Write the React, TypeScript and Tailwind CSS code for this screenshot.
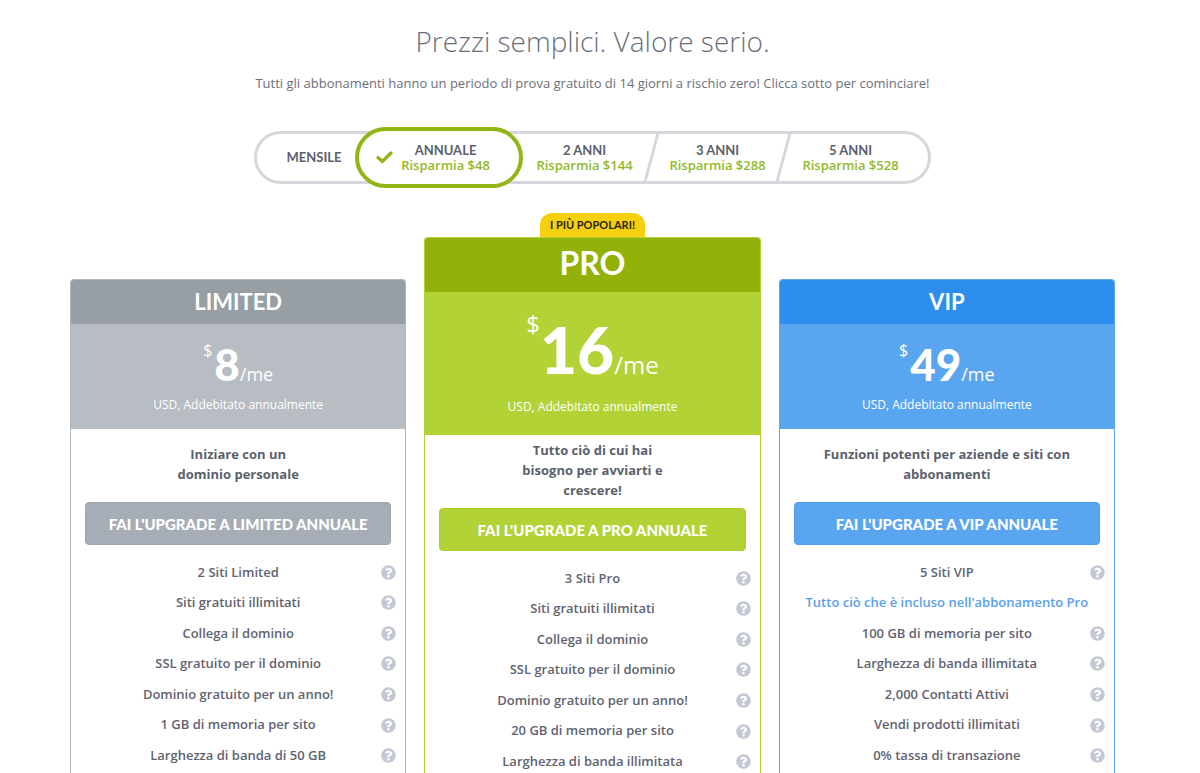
import React, { useState } from 'react';
import { FaQuestionCircle } from 'react-icons/fa';
import { clsx } from 'clsx';

type Term = {
  id: string;
  label: string;
  saving?: string;
  width: string;
};

type Feature = {
  text: string;
  highlight?: boolean;
};

type Plan = {
  id: string;
  name: string;
  price: string;
  description: string;
  cta: string;
  featured?: boolean;
  border: string;
  header: string;
  body: string;
  button: string;
  descriptionWidth: string;
  features: Feature[];
};

const terms: Term[] = [
  { id: 'monthly', label: 'MENSILE', width: 'w-[98px] pl-4' },
  { id: 'yearly', label: 'ANNUALE', saving: 'Risparmia $48', width: 'w-[168px] pr-3' },
  { id: '2y', label: '2 ANNI', saving: 'Risparmia $144', width: 'w-[127px] pr-1' },
  { id: '3y', label: '3 ANNI', saving: 'Risparmia $288', width: 'w-[129px]' },
  { id: '5y', label: '5 ANNI', saving: 'Risparmia $528', width: 'w-[143px] pr-3' },
];

const plans: Plan[] = [
  {
    id: 'limited',
    name: 'LIMITED',
    price: '8',
    description: 'Iniziare con un dominio personale',
    cta: "FAI L'UPGRADE A LIMITED ANNUALE",
    border: 'border-[#b0b5c0]',
    header: 'bg-[#979ea4]',
    body: 'bg-[#b7bdc2]',
    button: 'bg-[#a7adb6] border-[#a0a6ae]',
    descriptionWidth: 'max-w-[140px]',
    features: [
      { text: '2 Siti Limited' },
      { text: 'Siti gratuiti illimitati' },
      { text: 'Collega il dominio' },
      { text: 'SSL gratuito per il dominio' },
      { text: 'Dominio gratuito per un anno!' },
      { text: '1 GB di memoria per sito' },
      { text: 'Larghezza di banda di 50 GB' },
    ],
  },
  {
    id: 'pro',
    name: 'PRO',
    price: '16',
    description: 'Tutto ciò di cui hai bisogno per avviarti e crescere!',
    cta: "FAI L'UPGRADE A PRO ANNUALE",
    featured: true,
    border: 'border-[#b2d235]',
    header: 'bg-[#92b20a]',
    body: 'bg-[#b2d235]',
    button: 'bg-[#b2d235] border-[#abcc2b]',
    descriptionWidth: 'max-w-[150px]',
    features: [
      { text: '3 Siti Pro' },
      { text: 'Siti gratuiti illimitati' },
      { text: 'Collega il dominio' },
      { text: 'SSL gratuito per il dominio' },
      { text: 'Dominio gratuito per un anno!' },
      { text: '20 GB di memoria per sito' },
      { text: 'Larghezza di banda illimitata' },
    ],
  },
  {
    id: 'vip',
    name: 'VIP',
    price: '49',
    description: 'Funzioni potenti per aziende e siti con abbonamenti',
    cta: "FAI L'UPGRADE A VIP ANNUALE",
    border: 'border-[#5aa5f0]',
    header: 'bg-[#2e8eed]',
    body: 'bg-[#5aa5f0]',
    button: 'bg-[#5aa5f0] border-[#509eec]',
    descriptionWidth: 'max-w-[260px]',
    features: [
      { text: '5 Siti VIP' },
      { text: "Tutto ciò che è incluso nell'abbonamento Pro", highlight: true },
      { text: '100 GB di memoria per sito' },
      { text: 'Larghezza di banda illimitata' },
      { text: '2,000 Contatti Attivi' },
      { text: 'Vendi prodotti illimitati' },
      { text: '0% tassa di transazione' },
    ],
  },
];

const TermPicker: React.FC = () => {
  const [selected, setSelected] = useState('yearly');

  return (
    <div className="mx-auto flex h-[53px] w-fit items-stretch rounded-full border-3 border-[#d6d7dc]">
      {terms.map((term, i) => {
        const active = term.id === selected;
        return (
          <React.Fragment key={term.id}>
            {i > 2 && <span className="w-[3px] -skew-x-[15deg] bg-[#d6d7dc]" />}
            <button
              type="button"
              aria-pressed={active}
              onClick={() => setSelected(term.id)}
              className={clsx(
                'flex items-center justify-center gap-2 text-[13px] leading-[15px]',
                term.width,
                active && 'relative z-10 -my-[7px] rounded-full border-4 border-[#92b516] bg-white',
              )}
            >
              {active && (
                <svg viewBox="0 0 17 13" className="h-[13px] w-[17px]" fill="none">
                  <path
                    d="M2 6.5L6.3 10.5L15 2"
                    stroke="#92b516"
                    strokeWidth="3.2"
                    strokeLinecap="round"
                    strokeLinejoin="miter"
                  />
                </svg>
              )}
              <span className="flex flex-col items-center whitespace-nowrap">
                <span className="font-['Lato',sans-serif] font-bold text-[#5b5f6b]">{term.label}</span>
                {term.saving && <span className="font-semibold text-[#92b92a]">{term.saving}</span>}
              </span>
            </button>
          </React.Fragment>
        );
      })}
    </div>
  );
};

const PlanCard: React.FC<{ plan: Plan }> = ({ plan }) => {
  const featured = plan.featured;

  return (
    <section className={clsx('flex flex-col', !featured && 'pt-[66px]')}>
      {featured && (
        <p className="mx-auto flex h-6 items-center rounded-t-xl bg-[#f6cf0e] px-[10px] font-['Lato',sans-serif] text-[11px] font-bold text-[#26260a]">
          I PIÙ POPOLARI!
        </p>
      )}
      <div className={clsx('flex flex-1 flex-col rounded-t border border-b-0', plan.border)}>
        <h2
          className={clsx(
            "flex items-center justify-center rounded-t-[3px] font-['Lato',sans-serif] font-bold text-white",
            plan.header,
            featured ? 'h-[54px] pb-1 text-[32px]' : 'h-[44px] pb-[2px] text-[22px]',
          )}
        >
          {plan.name}
        </h2>
        <div
          className={clsx(
            'flex flex-col items-center text-white',
            plan.body,
            featured ? 'h-[143px] pt-[20px]' : 'h-[105px] pt-[15px]',
          )}
        >
          <p className={clsx('flex items-start', featured ? 'h-[85px]' : 'h-[56px]')}>
            <span className={featured ? 'text-[24px] leading-[24px]' : 'text-[16px] leading-[22px]'}>$</span>
            <span className="flex items-baseline">
              <span
                className={clsx(
                  "font-['Lato',sans-serif] font-black",
                  featured ? 'text-[64px] leading-[76px]' : 'ml-[2px] text-[44px] leading-[50px]',
                )}
              >
                {plan.price}
              </span>
              <span className={featured ? 'text-[24px]' : 'text-[18px]'}>/me</span>
            </span>
          </p>
          <p className="text-[12px] leading-[20px]">USD, Addebitato annualmente</p>
        </div>
        <div className="flex h-[73px] items-center justify-center pb-[3px]">
          <p className={clsx('text-center text-[13px] leading-[20px] font-bold text-[#5b5f6b]', plan.descriptionWidth)}>
            {plan.description}
          </p>
        </div>
        <button
          type="button"
          className={clsx(
            "mx-[14px] h-[43px] rounded border font-['Lato',sans-serif] text-[15px] leading-[20px] font-black text-white",
            plan.button,
          )}
        >
          {plan.cta}
        </button>
        <ul className="mt-3 grid h-[214px] auto-rows-fr px-[9px]">
          {plan.features.map(feature => (
            <li
              key={feature.text}
              className={clsx(
                'grid grid-cols-[15px_1fr_15px] items-center text-center text-[13px] font-semibold',
                feature.highlight ? 'text-[#5aa0ea]' : 'text-[#5f6370]',
              )}
            >
              <span className="col-start-2 whitespace-nowrap">{feature.text}</span>
              {!feature.highlight && (
                <button type="button" aria-label={feature.text} className="text-[15px] text-[#c3c8d4]">
                  <FaQuestionCircle />
                </button>
              )}
            </li>
          ))}
        </ul>
      </div>
    </section>
  );
};

export default function App() {
  return (
    <main className="flex min-h-screen flex-col bg-white pr-[15px] font-['Open_Sans',sans-serif] text-[#6b6f7b]">
      <header className="pt-[21px] text-center">
        <h1 className="text-[28px] leading-[40px] font-light">Prezzi semplici. Valore serio.</h1>
        <p className="mt-3 mb-[38px] text-[13px] leading-[20px]">
          Tutti gli abbonamenti hanno un periodo di prova gratuito di 14 giorni a rischio zero! Clicca sotto per
          cominciare!
        </p>
      </header>
      <TermPicker />
      <div className="mx-auto mt-[29px] grid w-full max-w-[1045px] flex-1 grid-cols-3 gap-[18px]">
        {plans.map(plan => (
          <PlanCard key={plan.id} plan={plan} />
        ))}
      </div>
    </main>
  );
}
